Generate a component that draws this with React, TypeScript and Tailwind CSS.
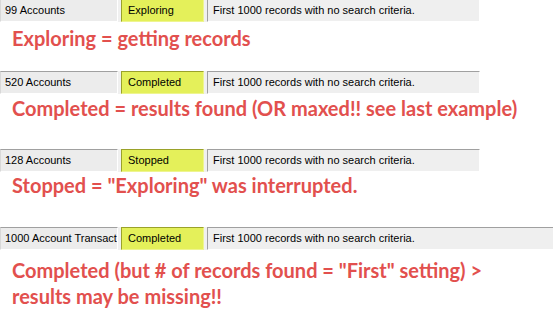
const RED = 'text-[#e2504e]';

function StatusBar({ count, status, wide = false }: { count: string; status: string; wide?: boolean }) {
  return (
    <div
      className={`flex h-[23px] shrink-0 gap-[3px] bg-[#f0f0f0] text-[11px] text-black ${wide ? 'w-[600px]' : 'w-[480px]'}`}
      style={{ fontFamily: '"Liberation Sans", Arial, sans-serif' }}
    >
      <div className="flex w-[118px] items-center overflow-hidden whitespace-nowrap border-t border-l border-t-[#a0a0a0] border-l-[#d8d8d8] border-b border-r border-b-white border-r-white bg-[#ececec] pl-[4px]">
        {count}
      </div>
      <div className="flex w-[83px] items-center border-t border-l border-t-[#9aa22a] border-l-[#9aa22a] border-b border-r border-b-[#eef590] border-r-[#eef590] bg-[#e4f05a] pl-[6px]">
        {status}
      </div>
      <div className="flex flex-1 items-center whitespace-nowrap border-t border-l border-t-[#a0a0a0] border-l-[#a0a0a0] border-b border-r border-b-white border-r-white bg-[#efefef] pl-[5px]">
        First 1000 records with no search criteria.
      </div>
    </div>
  );
}

function Caption({ children, className = '' }: { children: React.ReactNode; className?: string }) {
  return (
    <p
      className={`pl-[12px] text-[20px] font-bold leading-[26px] ${RED} ${className}`}
      style={{ fontFamily: 'Lato, "Open Sans", sans-serif' }}
    >
      {children}
    </p>
  );
}

export default function App() {
  return (
    <div className="flex h-[319px] w-[553px] flex-col overflow-hidden bg-white">
      <div className="-mt-px">
        <StatusBar count="99 Accounts" status="Exploring" />
      </div>
      <Caption className="mt-[3px]">Exploring = getting records</Caption>
      <div className="mt-[20px]">
        <StatusBar count="520 Accounts" status="Completed" />
      </div>
      <Caption className="mt-[1px]">Completed = results found (OR maxed!! see last example)</Caption>
      <div className="mt-[28px]">
        <StatusBar count="128 Accounts" status="Stopped" />
      </div>
      <Caption>Stopped = "Exploring" was interrupted.</Caption>
      <div className="mt-[29px]">
        <StatusBar count="1000 Account Transactions" status="Completed" wide />
      </div>
      <Caption className="mt-[7px] leading-[25px]">
        Completed (but # of records found = "First" setting) &gt;
        <br />
        results may be missing!!
      </Caption>
    </div>
  );
}
